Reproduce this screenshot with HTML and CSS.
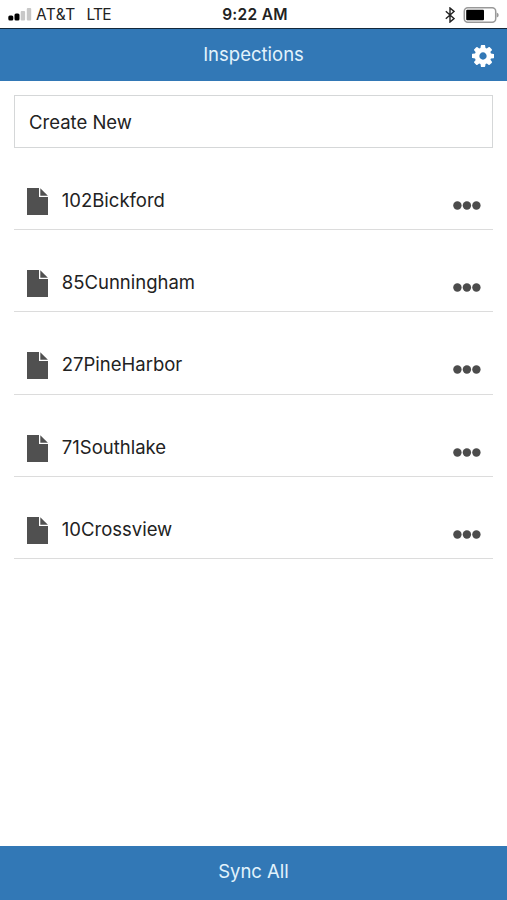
FILE: index.html
```html
<!DOCTYPE html>
<html lang="en">
<head>
    <meta charset="UTF-8">
    <meta name="viewport" content="width=device-width, initial-scale=1.0">
    <title>Inspections</title>
    <link rel="stylesheet" href="styles.css">
</head>
<body>
<!-- shared icons -->
<svg class="icon-defs" width="0" height="0">
    <symbol id="file" viewBox="0 0 21 27">
        <path d="M0 0h12v9h9v18H0z"/>
        <path d="M13.300 0.300L20.900 7.700h-7.600z"/>
    </symbol>
    <symbol id="dots" viewBox="0 0 28 9">
        <circle cx="4.400" cy="4.500" r="4.200"/>
        <circle cx="13.900" cy="4.500" r="4.200"/>
        <circle cx="23.400" cy="4.500" r="4.200"/>
    </symbol>
</svg>

<div class="status-bar">
    <div class="status-left">
        <svg class="signal" viewBox="0 0 24 13" width="24" height="13">
            <rect x="0.300" y="7.500" width="5" height="5" rx="1.500"/>
            <rect x="6.500" y="5.500" width="5" height="7" rx="1.500"/>
            <rect class="weak" x="12.700" y="3" width="4.400" height="9.500" rx="1"/>
            <rect class="weak" x="18.800" y="0" width="4.400" height="12.500" rx="1"/>
        </svg>
        <span class="carrier">AT&amp;T</span>
        <span class="network">LTE</span>
    </div>
    <div class="time">9:22 AM</div>
    <div class="status-right">
        <svg class="bluetooth" viewBox="0 0 10 16" width="10" height="16">
            <path d="M0.800 4.200L9 11.600 5 15V1l4 3.400L0.800 11.800"/>
        </svg>
        <svg class="battery" viewBox="0 0 36 16" width="36" height="16">
            <rect class="case" x="1.300" y="0.800" width="31.400" height="14.400" rx="3.500"/>
            <rect x="3.200" y="2.800" width="17.800" height="10.400" rx="1"/>
            <path class="tip" d="M33.700 5.500q2 0.500 2 2.500t-2 2.500z"/>
        </svg>
    </div>
</div>

<div class="header">
    <h1>Inspections</h1>
    <button class="settings" aria-label="Settings">
        <svg viewBox="0 128 1536 1536" width="22" height="22">
            <path d="M1024 896q0-106-75-181t-181-75-181 75-75 181 75 181 181 75 181-75 75-181zm512-109v222q0 12-8 23t-20 13l-185 28q-19 54-39 91 35 50 107 138 10 12 10 25t-9 23q-27 37-99 108t-94 71q-12 0-26-9l-138-108q-44 23-91 38-16 136-29 186-7 28-36 28h-222q-14 0-24.500-8.500t-11.500-21.500l-28-184q-49-16-90-37l-141 107q-10 9-25 9-14 0-25-11-126-114-165-168-7-10-7-23 0-12 8-23 15-21 51-66.500t54-70.500q-27-50-41-99l-183-27q-13-2-21-12.500t-8-23.500v-222q0-12 8-23t19-13l186-28q14-46 39-92-40-57-107-138-10-12-10-24 0-10 9-23 26-36 98.500-107.500t94.500-71.500q13 0 26 10l138 107q44-23 91-38 16-136 29-186 7-28 36-28h222q14 0 24.500 8.500t11.500 21.500l28 184q49 16 90 37l142-107q9-9 24-9 13 0 25 10 129 119 165 170 7 8 7 22 0 12-8 23-15 21-51 66.500t-54 70.500q26 50 41 98l183 28q13 2 21 12.500t8 23.500z"/>
        </svg>
    </button>
</div>

<div class="content">
    <button class="create">Create New</button>
    <ul class="list">
        <li class="row">
            <svg class="file"><use href="#file"/></svg>
            <span class="name">102Bickford</span>
            <svg class="dots"><use href="#dots"/></svg>
        </li>
        <li class="row">
            <svg class="file"><use href="#file"/></svg>
            <span class="name">85Cunningham</span>
            <svg class="dots"><use href="#dots"/></svg>
        </li>
        <li class="row">
            <svg class="file"><use href="#file"/></svg>
            <span class="name">27PineHarbor</span>
            <svg class="dots"><use href="#dots"/></svg>
        </li>
        <li class="row">
            <svg class="file"><use href="#file"/></svg>
            <span class="name">71Southlake</span>
            <svg class="dots"><use href="#dots"/></svg>
        </li>
        <li class="row">
            <svg class="file"><use href="#file"/></svg>
            <span class="name">10Crossview</span>
            <svg class="dots"><use href="#dots"/></svg>
        </li>
    </ul>
</div>

<button class="sync">Sync All</button>
</body>
</html>
```

FILE: styles.css
```css
* {
    box-sizing: border-box;
}

body {
    display: flex;
    flex-direction: column;
    height: 100vh;
    margin: 0;
    background: #fff;
    color: #222;
    font-family: Inter, "Liberation Sans", sans-serif;
    font-size: 18.5px;
}

button {
    margin: 0;
    padding: 0;
    border: none;
    background: none;
    color: inherit;
    font: inherit;
}

.icon-defs {
    position: absolute;
}

/* status bar */
.status-bar {
    display: grid;
    grid-template-columns: 1fr auto 1fr;
    align-items: center;
    height: 28px;
    padding: 1px 8px 0;
    font-size: 15.5px;
}

.status-left,
.status-right {
    display: flex;
    align-items: center;
}

.status-right {
    justify-content: flex-end;
}

.signal {
    margin-right: 4px;
}

.signal .weak {
    fill: #c8c8c8;
}

.carrier {
    margin-right: 11px;
    letter-spacing: 0.4px;
}

.network {
    letter-spacing: -0.8px;
}

.time {
    padding-left: 3px;
    font-weight: 600;
    letter-spacing: 0.3px;
}

.bluetooth {
    margin-right: 8px;
    fill: none;
    stroke: #222;
    stroke-width: 1.4;
}

.battery .case {
    fill: none;
    stroke: #999;
    stroke-width: 1.5;
}

.battery .tip {
    fill: #999;
}

/* header */
.header {
    display: grid;
    grid-template-columns: 1fr auto 1fr;
    align-items: center;
    height: 53px;
    padding: 0 13px;
    border-top: 1px solid #14283a;
    background: #3278b6;
    color: #e2f3fc;
}

.header h1 {
    grid-column: 2;
    margin: 0;
    padding-bottom: 2px;
    font-size: 18.5px;
    font-weight: 400;
}

.settings {
    display: flex;
    justify-self: end;
    padding-top: 2px;
    fill: #fff;
}

/* list */
.content {
    flex: 1;
    padding: 14px 14px 0;
}

.create {
    display: block;
    width: 100%;
    height: 53px;
    padding-left: 14px;
    border: 1px solid #d5d7d8;
    text-align: left;
}

.list {
    margin: 0;
    padding: 0;
    list-style: none;
}

.row {
    display: flex;
    align-items: center;
    height: 82.2px;
    padding: 26px 12.5px 0 13.4px;
    border-bottom: 1px solid #dcdcdc;
}

.file {
    width: 21px;
    height: 27px;
    margin-right: 13.4px;
    fill: #505050;
}

.name {
    flex: 1;
    padding-bottom: 3px;
}

.dots {
    width: 28px;
    height: 9px;
    margin-top: 8px;
    fill: #4c4c4c;
}

/* bottom bar */
.sync {
    height: 54px;
    padding-bottom: 4px;
    background: #3278b6;
    color: #e2f3fc;
}
```
